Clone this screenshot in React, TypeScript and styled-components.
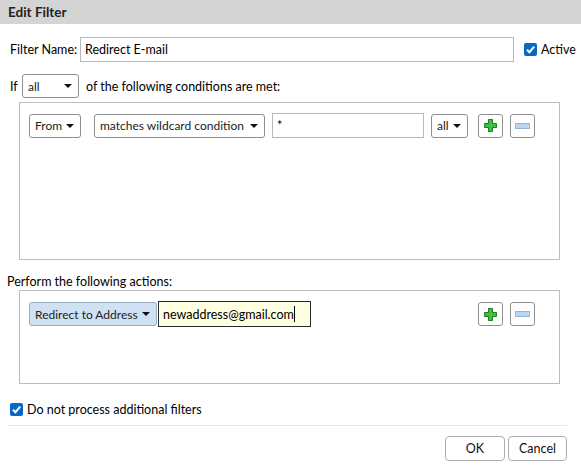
import React from 'react';
import styled, { createGlobalStyle } from 'styled-components';

const GlobalStyle = createGlobalStyle`
    html, body {
        margin: 0;
        padding: 0;
        background: #ffffff;
    }
    body {
        font-family: Lato, 'Noto Sans', sans-serif;
        font-size: 12.5px;
        color: #000000;
    }
`;

const Dialog = styled.div`
    width: 581px;
    height: 473px;
    background: #ffffff;
    display: flex;
    flex-direction: column;
    overflow: hidden;
`;

const TitleBar = styled.div`
    height: 24px;
    line-height: 24px;
    padding-left: 8px;
    background: #d4d4d4;
    font-weight: 700;
    font-size: 13.5px;
    color: #222222;
`;

const Body = styled.div`
    display: flex;
    flex-direction: column;
`;

interface IRowProps {
    top: number;
    left: number;
}

const Row = styled.div<IRowProps>`
    display: flex;
    align-items: center;
    margin-top: ${(p) => p.top}px;
    padding-left: ${(p) => p.left}px;
`;

const Label = styled.span<{ width?: number }>`
    white-space: nowrap;
    flex-shrink: 0;
    ${(p) => (p.width ? `width: ${p.width}px;` : '')}
`;

const TextBox = styled.div<{ width: number; height?: number }>`
    box-sizing: border-box;
    flex-shrink: 0;
    width: ${(p) => p.width}px;
    height: ${(p) => p.height ?? 25}px;
    border: 1px solid #b9b9b9;
    background: #ffffff;
    display: flex;
    align-items: center;
    padding-left: 4px;
`;

const EditBox = styled(TextBox)`
    background: #ffffe1;
    border: 1px solid #2a2a2a;
`;

const Caret = styled.span`
    display: inline-block;
    width: 1px;
    height: 16px;
    background: #000000;
`;

interface ISelectProps {
    width: number;
    highlight?: boolean;
}

const Select = styled.div<ISelectProps>`
    box-sizing: border-box;
    flex-shrink: 0;
    width: ${(p) => p.width}px;
    height: 24px;
    border: 1px solid ${(p) => (p.highlight ? '#9aabbd' : '#8f8f8f')};
    border-radius: 3px;
    background: ${(p) => (p.highlight ? '#cfe1f2' : '#ffffff')};
    display: flex;
    align-items: center;
    justify-content: space-between;
    padding: 0 6px 0 5px;
    white-space: nowrap;
    font-size: 12px;
    color: #222222;
`;

const Arrow = styled.span`
    width: 0;
    height: 0;
    border-left: 4px solid transparent;
    border-right: 4px solid transparent;
    border-top: 4px solid #111111;
`;

const Box = styled.div<{ height: number }>`
    box-sizing: border-box;
    margin-left: 19px;
    width: 541px;
    height: ${(p) => p.height}px;
    border: 1px solid #bdbdbd;
    padding: 10px 9px;
`;

const BoxRow = styled.div`
    display: flex;
    align-items: center;
`;

const Spacer = styled.div<{ w: number }>`
    width: ${(p) => p.w}px;
    flex-shrink: 0;
`;

const Grow = styled.div`
    flex-grow: 1;
`;

const IconButton = styled.div`
    box-sizing: border-box;
    flex-shrink: 0;
    width: 25px;
    height: 24px;
    border: 1px solid #8f8f8f;
    border-radius: 3px;
    background: #ffffff;
    display: flex;
    align-items: center;
    justify-content: center;
`;

const Check = styled.span`
    box-sizing: border-box;
    flex-shrink: 0;
    width: 13px;
    height: 13px;
    border-radius: 2px;
    background: #0a67c3;
    display: inline-flex;
    align-items: center;
    justify-content: center;
    margin-right: 4px;
`;

const Separator = styled.div`
    margin: 8px 0 0 8px;
    width: 559px;
    height: 1px;
    background: #e6e6e6;
`;

const Footer = styled.div`
    display: flex;
    justify-content: flex-end;
    gap: 3px;
    margin-top: 10px;
    padding-right: 14px;
`;

const Button = styled.div<{ width: number }>`
    box-sizing: border-box;
    width: ${(p) => p.width}px;
    height: 25px;
    border: 1px solid #adadad;
    border-radius: 4px;
    display: flex;
    align-items: center;
    justify-content: center;
    color: #111111;
`;

const CheckBox: React.FC = () => (
    <Check>
        <svg width="11" height="11" viewBox="0 0 11 11">
            <path d="M2 5.8 L4.4 8.2 L9.2 2.6" fill="none" stroke="#ffffff" strokeWidth="2" />
        </svg>
    </Check>
);

const PlusIcon: React.FC = () => (
    <svg width="15" height="15" viewBox="0 0 15 15">
        <path
            d="M5.5 1.5 H9.5 V5.5 H13.5 V9.5 H9.5 V13.5 H5.5 V9.5 H1.5 V5.5 H5.5 Z"
            fill="#3fbf3f"
            stroke="#1d7f1d"
            strokeWidth="1"
        />
    </svg>
);

const MinusIcon: React.FC = () => (
    <svg width="15" height="6" viewBox="0 0 15 6">
        <rect x="0.5" y="0.5" width="14" height="5" fill="#bcd6f2" stroke="#94b6dc" strokeWidth="1" />
    </svg>
);

const App: React.FC = () => {
    return (
        <>
            <GlobalStyle />
            <Dialog>
                <TitleBar>Edit Filter</TitleBar>
                <Body>
                    <Row top={13} left={10}>
                        <Label width={70}>Filter Name:</Label>
                        <TextBox width={434}>Redirect E-mail</TextBox>
                        <Spacer w={10} />
                        <CheckBox />
                        <Label>Active</Label>
                    </Row>
                    <Row top={12} left={10}>
                        <Label width={12}>If</Label>
                        <Select width={57}>
                            all <Arrow />
                        </Select>
                        <Spacer w={7} />
                        <Label>of the following conditions are met:</Label>
                    </Row>
                    <Row top={4} left={0}>
                        <Box height={158}>
                            <BoxRow>
                                <Select width={52}>
                                    From <Arrow />
                                </Select>
                                <Spacer w={13} />
                                <Select width={171}>
                                    matches wildcard condition <Arrow />
                                </Select>
                                <Spacer w={7} />
                                <TextBox width={152}>*</TextBox>
                                <Spacer w={7} />
                                <Select width={37}>
                                    all <Arrow />
                                </Select>
                                <Spacer w={10} />
                                <IconButton>
                                    <PlusIcon />
                                </IconButton>
                                <Spacer w={7} />
                                <IconButton>
                                    <MinusIcon />
                                </IconButton>
                            </BoxRow>
                        </Box>
                    </Row>
                    <Row top={14} left={7}>
                        <Label>Perform the following actions:</Label>
                    </Row>
                    <Row top={1} left={0}>
                        <Box height={94}>
                            <BoxRow>
                                <Select width={128} highlight>
                                    Redirect to Address <Arrow />
                                </Select>
                                <Spacer w={1} />
                                <EditBox width={153} height={26}>
                                    newaddress@gmail.com
                                    <Caret />
                                </EditBox>
                                <Grow />
                                <IconButton>
                                    <PlusIcon />
                                </IconButton>
                                <Spacer w={7} />
                                <IconButton>
                                    <MinusIcon />
                                </IconButton>
                                <Spacer w={15} />
                            </BoxRow>
                        </Box>
                    </Row>
                    <Row top={18} left={10}>
                        <CheckBox />
                        <Label>Do not process additional filters</Label>
                    </Row>
                    <Separator />
                    <Footer>
                        <Button width={60}>OK</Button>
                        <Button width={59}>Cancel</Button>
                    </Footer>
                </Body>
            </Dialog>
        </>
    );
};

export default App;
